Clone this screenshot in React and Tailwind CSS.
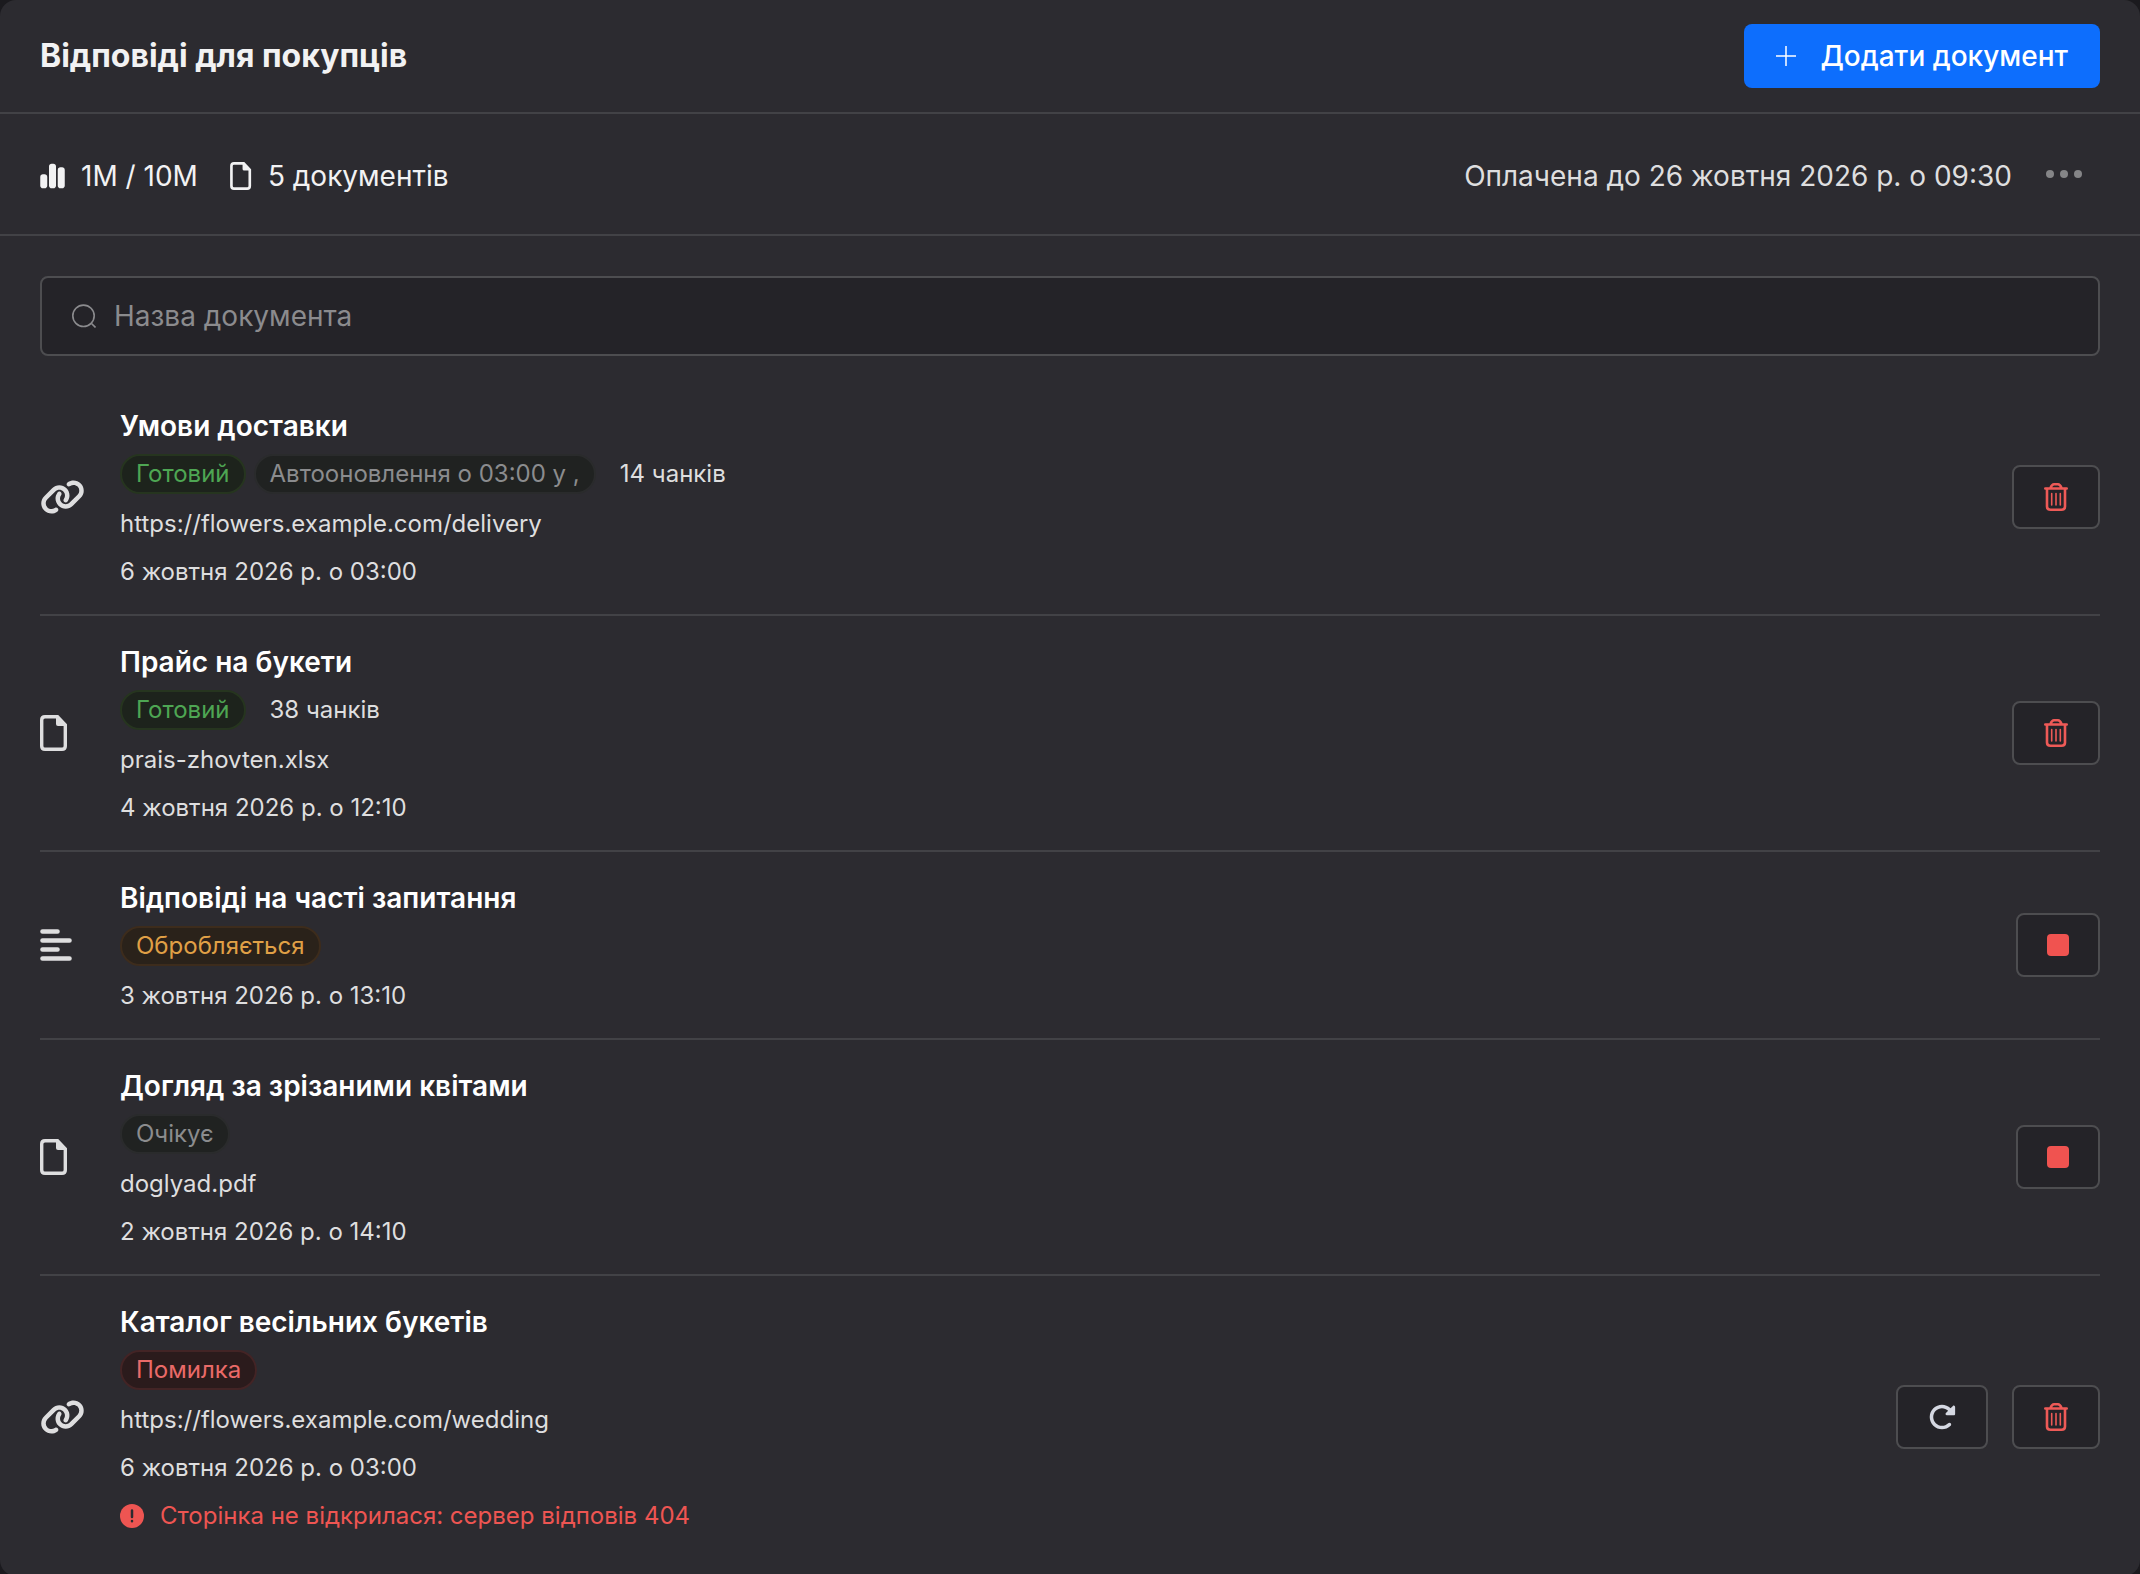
import React, { useState } from "react";
import { FaChartSimple, FaLink, FaRotateRight } from "react-icons/fa6";

const LinkIcon = () => <FaLink className="w-[45px] h-9" />;

const FileIcon = ({ className = "w-7 h-9" }) => (
  <svg className={className} viewBox="0 0 28 36" fill="none">
    <path
      d="M5 1.7H17.5L25.3 10V31C25.3 33 24.300 34.300 22 34.300H5C3 34.300 1.700 33 1.700 31V5C1.700 3 3 1.700 5 1.700Z"
      stroke="currentColor"
      strokeWidth={3.4}
    />
    <path d="M16 1.500L26 11H18Q16 11 16 9Z" fill="currentColor" />
  </svg>
);

const TextIcon = () => (
  <svg className="w-8 h-8" viewBox="0 0 32 32" stroke="currentColor" strokeWidth={4.6} strokeLinecap="round">
    <path d="M2.500 2.500H17.500M2.500 11.500H29.500M2.500 20.500H17.500M2.500 29.500H29.500" />
  </svg>
);

const TrashIcon = () => (
  <svg className="w-6 h-7" viewBox="0 0 24 28" fill="none" stroke="currentColor" strokeWidth={2.6} strokeLinecap="round">
    <path d="M1.300 5.500H22.700M6.500 5C7.500 2.300 8.500 1.300 10 1.300H14C15.500 1.300 16.500 2.300 17.500 5" />
    <path d="M3 6V23.500C3 25.500 4.500 26.700 6.500 26.700H17.500C19.500 26.700 21 25.500 21 23.500V6" />
    <path d="M7.700 10.500V22M12 10.500V22M16.300 10.500V22" strokeWidth={1.6} />
  </svg>
);

const icons = { link: LinkIcon, file: FileIcon, text: TextIcon };

const statuses = {
  ready: { label: "Готовий", style: "bg-[#1d231c] border-[#26351f] text-[#4ea653]" },
  processing: { label: "Обробляється", style: "bg-[#2a221a] border-[#3d2c1c] text-[#e0a046]" },
  waiting: { label: "Очікує", style: "bg-[#202221] border-[#2a2b2c] text-[#8b8c8e]" },
  error: { label: "Помилка", style: "bg-[#2b1b1c] border-[#432425] text-[#ea6a68]" },
};

const documents = [
  {
    id: 1,
    icon: "link",
    title: "Умови доставки",
    status: "ready",
    update: "Автооновлення о 03:00 у ,",
    chunks: "14 чанків",
    source: "https://flowers.example.com/delivery",
    date: "6 жовтня 2026 р. о 03:00",
    actions: ["delete"],
  },
  {
    id: 2,
    icon: "file",
    title: "Прайс на букети",
    status: "ready",
    chunks: "38 чанків",
    source: "prais-zhovten.xlsx",
    date: "4 жовтня 2026 р. о 12:10",
    actions: ["delete"],
  },
  {
    id: 3,
    icon: "text",
    title: "Відповіді на часті запитання",
    status: "processing",
    date: "3 жовтня 2026 р. о 13:10",
    actions: ["stop"],
  },
  {
    id: 4,
    icon: "file",
    title: "Догляд за зрізаними квітами",
    status: "waiting",
    source: "doglyad.pdf",
    date: "2 жовтня 2026 р. о 14:10",
    actions: ["stop"],
  },
  {
    id: 5,
    icon: "link",
    title: "Каталог весільних букетів",
    status: "error",
    source: "https://flowers.example.com/wedding",
    date: "6 жовтня 2026 р. о 03:00",
    error: "Сторінка не відкрилася: сервер відповів 404",
    actions: ["retry", "delete"],
  },
];

const actionTypes = {
  delete: { label: "Видалити", style: "w-[88px] text-[#ee5a57]", icon: <TrashIcon /> },
  stop: {
    label: "Зупинити",
    style: "w-[84px] text-[#f05350]",
    icon: <span className="block w-[22px] h-[22px] rounded bg-current" />,
  },
  retry: {
    label: "Повторити",
    style: "w-[92px] text-[#d5d8e2]",
    icon: <FaRotateRight className="w-7 h-7" />,
  },
};

function Badge({ style, children }) {
  return (
    <span className={`flex items-center h-10 px-[14px] rounded-full border-2 ${style}`}>
      {children}
    </span>
  );
}

function DocumentRow({ doc }) {
  const Icon = icons[doc.icon];
  const status = statuses[doc.status];

  return (
    <li className="flex items-center border-b-2 border-[#424246] last:border-transparent">
      <div className="w-20 shrink-0 text-[#dededf]">
        <Icon />
      </div>
      <div className="flex-1 min-w-0 pt-6 pb-[18px] text-2xl leading-[48px] text-[#dededf]">
        <h2 className="text-[28px] leading-[44px] font-semibold text-white">{doc.title}</h2>
        <div className="flex items-center h-[52px]">
          <Badge style={status.style}>{status.label}</Badge>
          {doc.update && (
            <span className="flex ml-2">
              <Badge style={statuses.waiting.style}>{doc.update}</Badge>
            </span>
          )}
          {doc.chunks && <span className="ml-6">{doc.chunks}</span>}
        </div>
        {doc.source && <p>{doc.source}</p>}
        <p>{doc.date}</p>
        {doc.error && (
          <p className="flex items-center gap-4 text-[#ee5552]">
            <svg className="w-6 h-6" viewBox="0 0 24 24">
              <circle cx="12" cy="12" r="12" fill="currentColor" />
              <path d="M12 6.500V13M12 17V17.200" stroke="#2c2b30" strokeWidth={2.5} strokeLinecap="round" />
            </svg>
            {doc.error}
          </p>
        )}
      </div>
      <div className="flex gap-6">
        {doc.actions.map((name) => {
          const action = actionTypes[name];
          return (
            <button
              key={name}
              type="button"
              aria-label={action.label}
              className={`flex items-center justify-center h-16 rounded-lg border-2 border-[#4d4d50] bg-[#242328] ${action.style}`}
            >
              {action.icon}
            </button>
          );
        })}
      </div>
    </li>
  );
}

export default function App() {
  const [query, setQuery] = useState("");

  const visible = documents.filter((doc) =>
    doc.title.toLowerCase().includes(query.toLowerCase())
  );

  return (
    <div className="min-h-screen bg-[#1b1a1e] font-['Inter',sans-serif]">
      <main className="min-h-screen rounded-2xl bg-[#2c2b30] pb-4">
        <header className="flex items-center justify-between px-10 py-6 border-b-2 border-[#424246]">
          <h1 className="text-[32px] leading-10 font-bold text-[#f2f2f3]">Відповіді для покупців</h1>
          <button
            type="button"
            className="flex items-center gap-6 h-16 px-8 rounded-lg bg-[#0d6efd] text-[28px] font-medium text-white"
          >
            <svg className="w-5 h-5" viewBox="0 0 20 20" stroke="currentColor" strokeWidth={1.5}>
              <path d="M10 0V20M0 10H20" />
            </svg>
            Додати документ
          </button>
        </header>

        <div className="flex items-center justify-between h-[122px] px-10 pt-1 border-b-2 border-[#424246] text-[28px] leading-10 text-[#f2f2f3]">
          <div className="flex items-center gap-8">
            <span className="flex items-center gap-4">
              <FaChartSimple className="w-[25px] h-7" />
              1M / 10M
            </span>
            <span className="flex items-center gap-4">
              <FileIcon className="w-[22px] h-7" />
              5 документів
            </span>
          </div>
          <div className="flex items-center gap-8 pr-4">
            <span className="text-[#dededf]">Оплачена до 26 жовтня 2026 р. о 09:30</span>
            <button type="button" aria-label="Меню" className="text-[#858587]">
              <svg className="w-10 h-3" viewBox="0 0 40 12" fill="currentColor">
                <circle cx="6" cy="4" r="4" />
                <circle cx="20" cy="4" r="4" />
                <circle cx="34" cy="4" r="4" />
              </svg>
            </button>
          </div>
        </div>

        <div className="px-10 pt-10">
          <label className="flex items-center gap-[18px] h-20 px-[30px] rounded-lg border-2 border-[#4d4d50] bg-[#242328] text-[#8b8b8e]">
            <svg className="w-6 h-6 shrink-0" viewBox="0 0 24 24" fill="none" stroke="currentColor" strokeWidth={1.6}>
              <circle cx="11.500" cy="11.800" r="10.700" />
              <path d="M19.500 19.500L23.500 23.500" />
            </svg>
            <input
              type="text"
              aria-label="Назва документа"
              placeholder="Назва документа"
              value={query}
              onChange={(e) => setQuery(e.target.value)}
              className="flex-1 bg-transparent text-[28px] text-[#f2f2f3] placeholder:text-[#8b8b8e] outline-none"
            />
          </label>

          <ul className="mt-6">
            {visible.map((doc) => (
              <DocumentRow key={doc.id} doc={doc} />
            ))}
          </ul>
        </div>
      </main>
    </div>
  );
}
